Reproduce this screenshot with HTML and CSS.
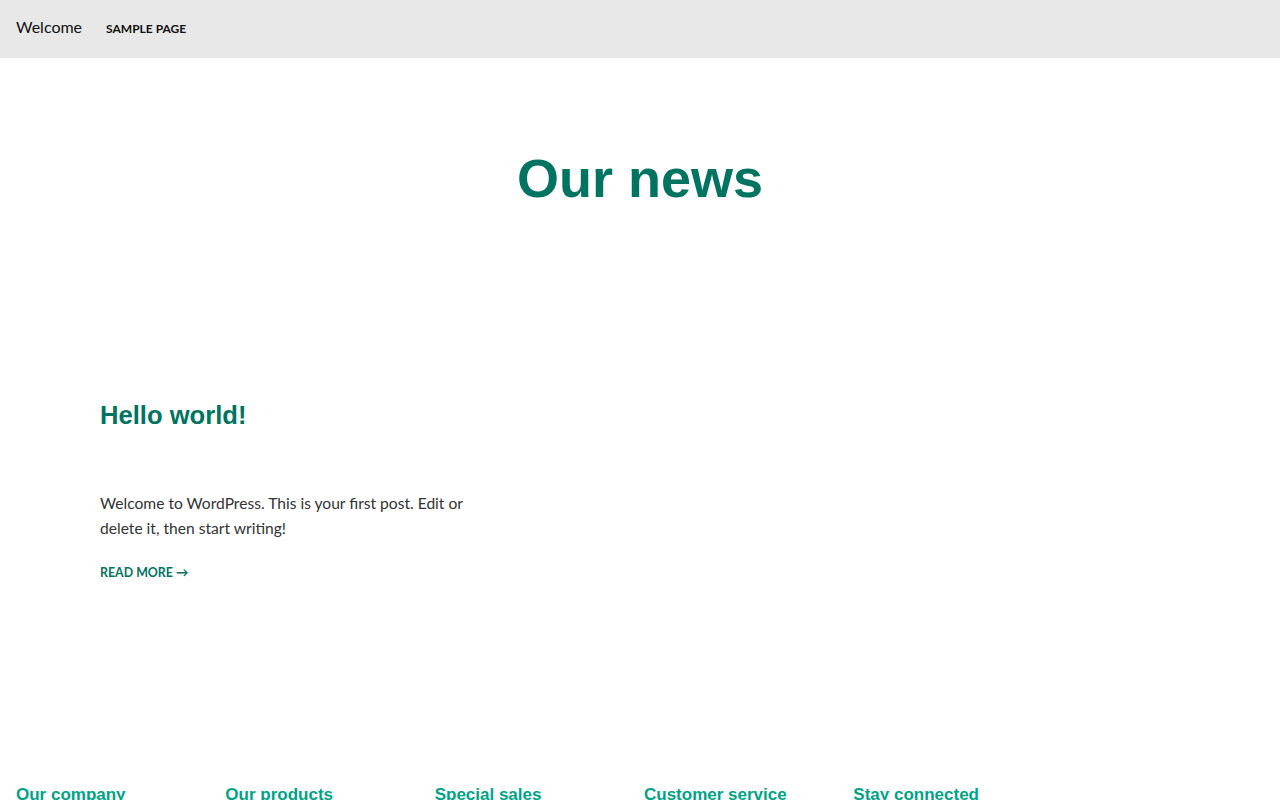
FILE: index.html
```html
<!DOCTYPE html>
<html lang="en">
<head>
<meta charset="utf-8">
<title>Our news</title>
<link rel="stylesheet" href="styles.css">
</head>
<body>
<header class="site-header">
  <a class="site-title" href="#">Welcome</a>
  <nav class="nav"><a href="#">SAMPLE PAGE</a></nav>
</header>
<main class="main">
  <h1 class="page-title">Our news</h1>
  <article class="post">
    <h2 class="post-title">Hello world!</h2>
    <p class="post-excerpt">Welcome to WordPress. This is your first post. Edit or delete it, then start writing!</p>
    <a class="read-more" href="#">READ MORE <span class="arrow">&#8594;</span></a>
  </article>
</main>
<footer class="site-footer">
  <div class="footer-col"><h3>Our company</h3></div>
  <div class="footer-col"><h3>Our products</h3></div>
  <div class="footer-col"><h3>Special sales</h3></div>
  <div class="footer-col"><h3>Customer service</h3></div>
  <div class="footer-col"><h3>Stay connected</h3></div>
</footer>
</body>
</html>
```
FILE: styles.css
```css
* { box-sizing: border-box; }
body {
  margin: 0;
  font-family: Lato, "Open Sans", sans-serif;
  color: #333;
  background: #fff;
}
a { text-decoration: none; }
.site-header {
  height: 58px;
  background: #e8e8e8;
  display: flex;
  align-items: center;
  padding: 0 16px 5px;
  gap: 24px;
}
.site-title {
  color: #111;
  font-size: 16px;
}
.nav a {
  color: #111;
  font-size: 12px;
  font-weight: 700;
}
.main {
  padding: 0 100px;
}
.page-title {
  margin: 0;
  padding-top: 88px;
  text-align: center;
  font-family: "Liberation Sans", Arial, sans-serif;
  font-weight: 700;
  font-size: 54px;
  line-height: 64px;
  color: #007460;
}
.post {
  padding-top: 190px;
  width: 380px;
}
.post-title {
  margin: 0;
  font-family: "Liberation Sans", Arial, sans-serif;
  font-weight: 700;
  font-size: 25.6px;
  line-height: 30px;
  color: #007460;
}
.post-excerpt {
  margin: 61px 0 0;
  font-size: 15.6px;
  line-height: 25px;
  color: #333;
}
.read-more {
  display: inline-block;
  margin-top: 24px;
  font-size: 12.4px;
  font-weight: 700;
  color: #007460;
}
.arrow { font-weight: 700; }
.site-footer {
  margin-top: 203px;
  padding: 0 8px 40px 16px;
  display: grid;
  grid-template-columns: repeat(6, 1fr);
}
.footer-col h3 {
  margin: 0;
  font-family: "Liberation Sans", Arial, sans-serif;
  font-weight: 700;
  font-size: 17px;
  line-height: 24px;
  color: #00a386;
}
```
